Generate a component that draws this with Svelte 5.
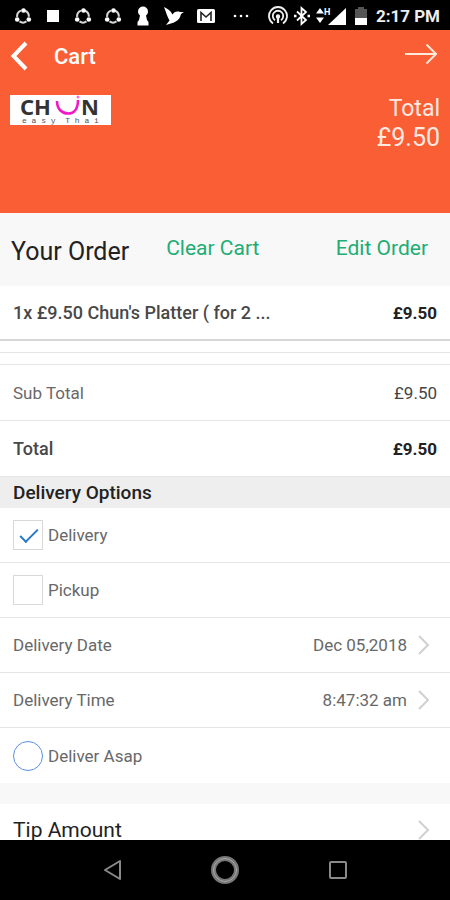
<!--
  CartScreen — the order summary of a takeaway app, shown inside the
  phone's own status bar and navigation bar.
-->
<script lang="ts">
  type Item = { label: string; price: string };

  const items: Item[] = [{ label: "1x £9.50 Chun's Platter ( for 2 ...", price: '£9.50' }];
  const total = '£9.50';

  const slots = [
    { label: 'Delivery Date', value: 'Dec 05,2018' },
    { label: 'Delivery Time', value: '8:47:32 am' }
  ];

  let method = $state('delivery');
  let asap = $state(false);

  function toggleAsap() {
    asap = !asap;
  }
</script>

{#snippet share()}
  <svg width="18" height="18" viewBox="0 0 18 18" fill="none" stroke="#d8d8d8" stroke-width="2">
    <path d="M7 3.6A6 6 0 0 0 3.2 10M11 3.8a6 6 0 0 1 3.8 6M5.5 14.4a6 6 0 0 0 7 0" />
    <g fill="#fff" stroke="none">
      <circle cx="9.5" cy="3.5" r="2.3" />
      <circle cx="3.2" cy="12.5" r="2.3" />
      <circle cx="14.8" cy="12.5" r="2.3" />
    </g>
  </svg>
{/snippet}

{#snippet chevron()}
  <svg class="chevron" width="12" height="20" viewBox="0 0 12 20" fill="none" stroke="#d0d0d0" stroke-width="2">
    <path d="M1 1l9 9-9 9" />
  </svg>
{/snippet}

<div class="phone">
  <div class="status">
    <div class="notices">
      {@render share()}
      <svg width="18" height="18" viewBox="0 0 18 18"><rect x="3" y="3" width="12" height="12" fill="#fff" /></svg>
      {@render share()}
      {@render share()}
      <svg width="18" height="20" viewBox="0 0 18 20" fill="#fff">
        <path d="M9 .5a5 5 0 0 0-5 5c0 2 1 3 2 4L5 14l-1.500 2v3.500h11V16L13 14l-1-4.500c1-1 2-2 2-4a5 5 0 0 0-5-5z" />
      </svg>
      <svg width="20" height="20" viewBox="0 0 20 20" fill="#fff">
        <path d="M0 1c3 1.500 6.500 3.500 8.500 7.500C10 6 12 5 14.500 5.500c1.500.3 2.500.8 5.500.5-2 1-3 1.500-3.500 3.500-1 4-4 6-8 7.500L2 19l3.500-4.500C3 10 2 6 0 1z" />
      </svg>
      <svg width="20" height="18" viewBox="0 0 20 18">
        <rect x="1" y="2" width="18" height="14" rx="1.500" fill="#fff" />
        <path d="M5 14V5.500l5 4.500 5-4.500V14" fill="none" stroke="#222" stroke-width="1.600" />
      </svg>
      <svg class="more" width="18" height="18" viewBox="0 0 18 18" fill="#fff">
        <circle cx="3" cy="9" r="1.300" /><circle cx="9" cy="9" r="1.300" /><circle cx="15" cy="9" r="1.300" />
      </svg>
    </div>
    <div class="system">
      <svg width="20" height="20" viewBox="0 0 20 20" fill="none" stroke="#f0f0f0" stroke-width="1.800">
        <path d="M5 17.500a9 9 0 1 1 10 0M7 14.200a5.200 5.200 0 1 1 6 0" />
        <circle cx="10" cy="10.500" r="1.300" fill="#fff" />
        <path d="M10 11v6" stroke-width="2.200" />
      </svg>
      <svg width="18" height="20" viewBox="0 0 18 20" fill="none" stroke="#fff" stroke-width="1.800">
        <path d="M4 5.500l9 8.500-4.500 4V2L13 6l-9 8.500" />
        <path d="M1 10h2.500M14.500 10H17" stroke-width="2.400" />
      </svg>
      <svg width="30" height="20" viewBox="0 0 30 20" fill="#fff">
        <path d="M4 2l4 5.500H0zM4 17l4-5.500H0z" />
        <text x="8" y="9" font-size="9" font-weight="700">H</text>
        <path d="M30 2v17H12z" />
      </svg>
      <svg class="battery" width="12" height="20" viewBox="0 0 12 20">
        <path d="M3 1h6v2h3v9H0V3h3z" fill="#555" />
        <path d="M0 12h12v7H0z" fill="#fff" />
      </svg>
      <span class="clock">2:17 PM</span>
    </div>
  </div>

  <header>
    <div class="bar">
      <button type="button" class="icon-btn" aria-label="Back">
        <svg width="18" height="30" viewBox="0 0 18 30" fill="none" stroke="#fff" stroke-width="4">
          <path d="M16 2L3.500 15 16 28" />
        </svg>
      </button>
      <h1>Cart</h1>
      <button type="button" class="icon-btn next" aria-label="Checkout">
        <svg width="34" height="22" viewBox="0 0 34 22" fill="none" stroke="#ffe9d8" stroke-width="2">
          <path d="M1 11h30M22.500 1.500L32 11l-9.500 9.500" />
        </svg>
      </button>
    </div>
    <div class="summary">
      <svg class="logo" width="101" height="30" viewBox="0 0 101 30" role="img" aria-label="Chun easy Thai">
        <rect width="101" height="30" fill="#fff" />
        <g class="brand" fill="#333">
          <text x="10" y="20">CH</text>
          <text x="71" y="20">N</text>
        </g>
        <path d="M47 6c0 8 5 12.500 11 12.500S68 14 68 5" fill="none" stroke="#f218c4" stroke-width="2.600" />
        <circle cx="68" cy="2" r="1.500" fill="#f56fd8" />
        <text class="tagline" x="12" y="28" fill="#555">e&nbsp;a&nbsp;s&nbsp;y&nbsp;&nbsp;T&nbsp;h&nbsp;a&nbsp;i</text>
      </svg>
      <div class="amount">
        <span>Total</span>
        <strong>{total}</strong>
      </div>
    </div>
  </header>

  <main>
    <div class="order-head">
      <h2>Your Order</h2>
      <button type="button" class="action">Clear Cart</button>
      <button type="button" class="action edit">Edit Order</button>
    </div>

    {#each items as item}
      <div class="row item">
        <span class="name">{item.label}</span>
        <b>{item.price}</b>
      </div>
    {/each}
    <div class="strip"></div>
    <div class="strip"></div>

    <div class="row">
      <span>Sub Total</span>
      <span class="price">{total}</span>
    </div>
    <div class="row total">
      <span class="name">Total</span>
      <b>{total}</b>
    </div>

    <h3>Delivery Options</h3>
    <label class="row option">
      <input type="checkbox" checked={method === 'delivery'} onchange={() => (method = 'delivery')} />
      Delivery
    </label>
    <label class="row option">
      <input type="checkbox" checked={method === 'pickup'} onchange={() => (method = 'pickup')} />
      Pickup
    </label>
    {#each slots as slot}
      <button type="button" class="row slot">
        <span>{slot.label}</span>
        <span class="value">{slot.value}</span>
        {@render chevron()}
      </button>
    {/each}
    <label class="row option last">
      <input type="radio" checked={asap} onclick={toggleAsap} />
      Deliver Asap
    </label>

    <button type="button" class="row slot tip">
      <span>Tip Amount</span>
      {@render chevron()}
    </button>
  </main>

  <nav>
    <button type="button" class="icon-btn" aria-label="Back">
      <svg width="20" height="22" viewBox="0 0 20 22" fill="none" stroke="#8a8a8a" stroke-width="2" stroke-linejoin="round">
        <path d="M18 2v18L3 11z" />
      </svg>
    </button>
    <button type="button" class="icon-btn" aria-label="Home">
      <svg width="30" height="30" viewBox="0 0 30 30" fill="none">
        <circle cx="15" cy="15" r="11.500" stroke="#777" stroke-width="5" />
        <circle cx="15" cy="15" r="11.500" stroke="#aaa" stroke-width="1" />
      </svg>
    </button>
    <button type="button" class="icon-btn" aria-label="Recent apps">
      <svg width="20" height="20" viewBox="0 0 20 20" fill="none" stroke="#8a8a8a" stroke-width="2">
        <rect x="2" y="2" width="16" height="16" rx="1" />
      </svg>
    </button>
  </nav>
</div>

<style>
  :global(body) {
    margin: 0;
  }
  .phone {
    display: flex;
    flex-direction: column;
    height: 100vh;
    background: #fff;
    color: #686868;
    font-family: Roboto, sans-serif;
    font-size: 17px;
  }
  svg {
    display: block;
    flex: none;
  }
  button {
    font: inherit;
    color: inherit;
    background: none;
    border: none;
    padding: 0;
    cursor: pointer;
  }
  h1,
  h2,
  h3 {
    margin: 0;
  }

  .status {
    display: flex;
    flex: none;
    align-items: center;
    justify-content: space-between;
    height: 30px;
    padding: 2px 10px 0 14px;
    box-sizing: border-box;
    background: #000;
    color: #eee;
  }
  .notices,
  .system {
    display: flex;
    align-items: center;
  }
  .notices {
    gap: 12px;
  }
  .more {
    margin-left: 4px;
  }
  .system {
    gap: 5px;
  }
  .battery {
    margin: 0 4px;
  }
  .clock {
    font-size: 17px;
    font-weight: 700;
    white-space: nowrap;
  }

  header {
    flex: none;
    padding: 0 10px 61px;
    background: #fa5e34;
    color: #fff;
  }
  .bar {
    display: flex;
    align-items: center;
    height: 52px;
  }
  .bar h1 {
    margin-left: 26px;
    font-size: 22px;
    font-weight: 500;
  }
  .next {
    margin: 0 2px 4px auto;
  }
  .summary {
    display: flex;
    justify-content: space-between;
    align-items: flex-start;
    padding-top: 12px;
  }
  .logo {
    margin-top: 1px;
    overflow: visible;
  }
  .brand {
    font: 700 22px 'Noto Sans', sans-serif;
  }
  .tagline {
    font: 8px 'Liberation Mono', monospace;
  }
  .amount {
    display: flex;
    flex-direction: column;
    align-items: flex-end;
    color: #ffe9e0;
    font-size: 23px;
    line-height: 29px;
  }
  .amount strong {
    font-size: 25px;
    font-weight: 400;
  }

  main {
    flex: 1;
    min-height: 0;
    overflow: hidden;
  }
  .order-head {
    display: flex;
    align-items: center;
    box-sizing: border-box;
    height: 73px;
    padding: 4px 22px 0 11px;
    background: #f8f8f8;
  }
  .order-head h2 {
    color: #222;
    font-size: 25px;
    font-weight: 400;
  }
  .action {
    margin: 0 0 8px 37px;
    color: #20ad73;
    font-size: 21px;
  }
  .edit {
    margin-left: auto;
  }

  .row {
    display: flex;
    align-items: center;
    justify-content: space-between;
    box-sizing: border-box;
    width: 100%;
    height: 55px;
    padding: 0 13px;
    border-bottom: 1px solid #e6e6e6;
  }
  .row b {
    color: #222;
    font-weight: 700;
  }
  .name {
    color: #484848;
    font-size: 18px;
    font-weight: 500;
  }
  .item {
    border-bottom: 2px solid #d6d6d6;
  }
  .strip {
    height: 11px;
    border-bottom: 1px solid #e6e6e6;
  }
  .price {
    color: #444;
  }
  .total,
  .strip + .row {
    height: 56px;
  }
  h3 {
    height: 31px;
    padding: 0 13px;
    background: #eee;
    color: #222;
    font-size: 19px;
    font-weight: 500;
    line-height: 31px;
  }
  .option {
    justify-content: flex-start;
    gap: 5px;
  }
  .option input {
    appearance: none;
    display: grid;
    place-items: center;
    box-sizing: border-box;
    width: 30px;
    height: 30px;
    margin: 0;
    border: 1px solid #d8d8d8;
    background: #fff;
  }
  .option input[type='checkbox']:checked::before {
    content: '';
    width: 16px;
    height: 7px;
    margin: 0 0 3px 2px;
    border: solid #2577cc;
    border-width: 0 0 2px 2px;
    transform: rotate(-45deg);
  }
  .option input[type='radio'] {
    border-color: #5b8de0;
    border-radius: 50%;
  }
  .option input[type='radio']:checked {
    background: #5b8de0;
  }
  .slot {
    padding-right: 20px;
    text-align: left;
  }
  .slot .value {
    margin-left: auto;
  }
  .chevron {
    margin-left: 11px;
  }
  .last {
    border-bottom: none;
  }
  .tip {
    border-top: 21px solid #f8f8f8;
    height: 74px;
    color: #222;
    font-size: 21px;
  }

  nav {
    display: flex;
    flex: none;
    align-items: center;
    justify-content: space-evenly;
    height: 60px;
    padding: 0 14px;
    background: #000;
  }
</style>
